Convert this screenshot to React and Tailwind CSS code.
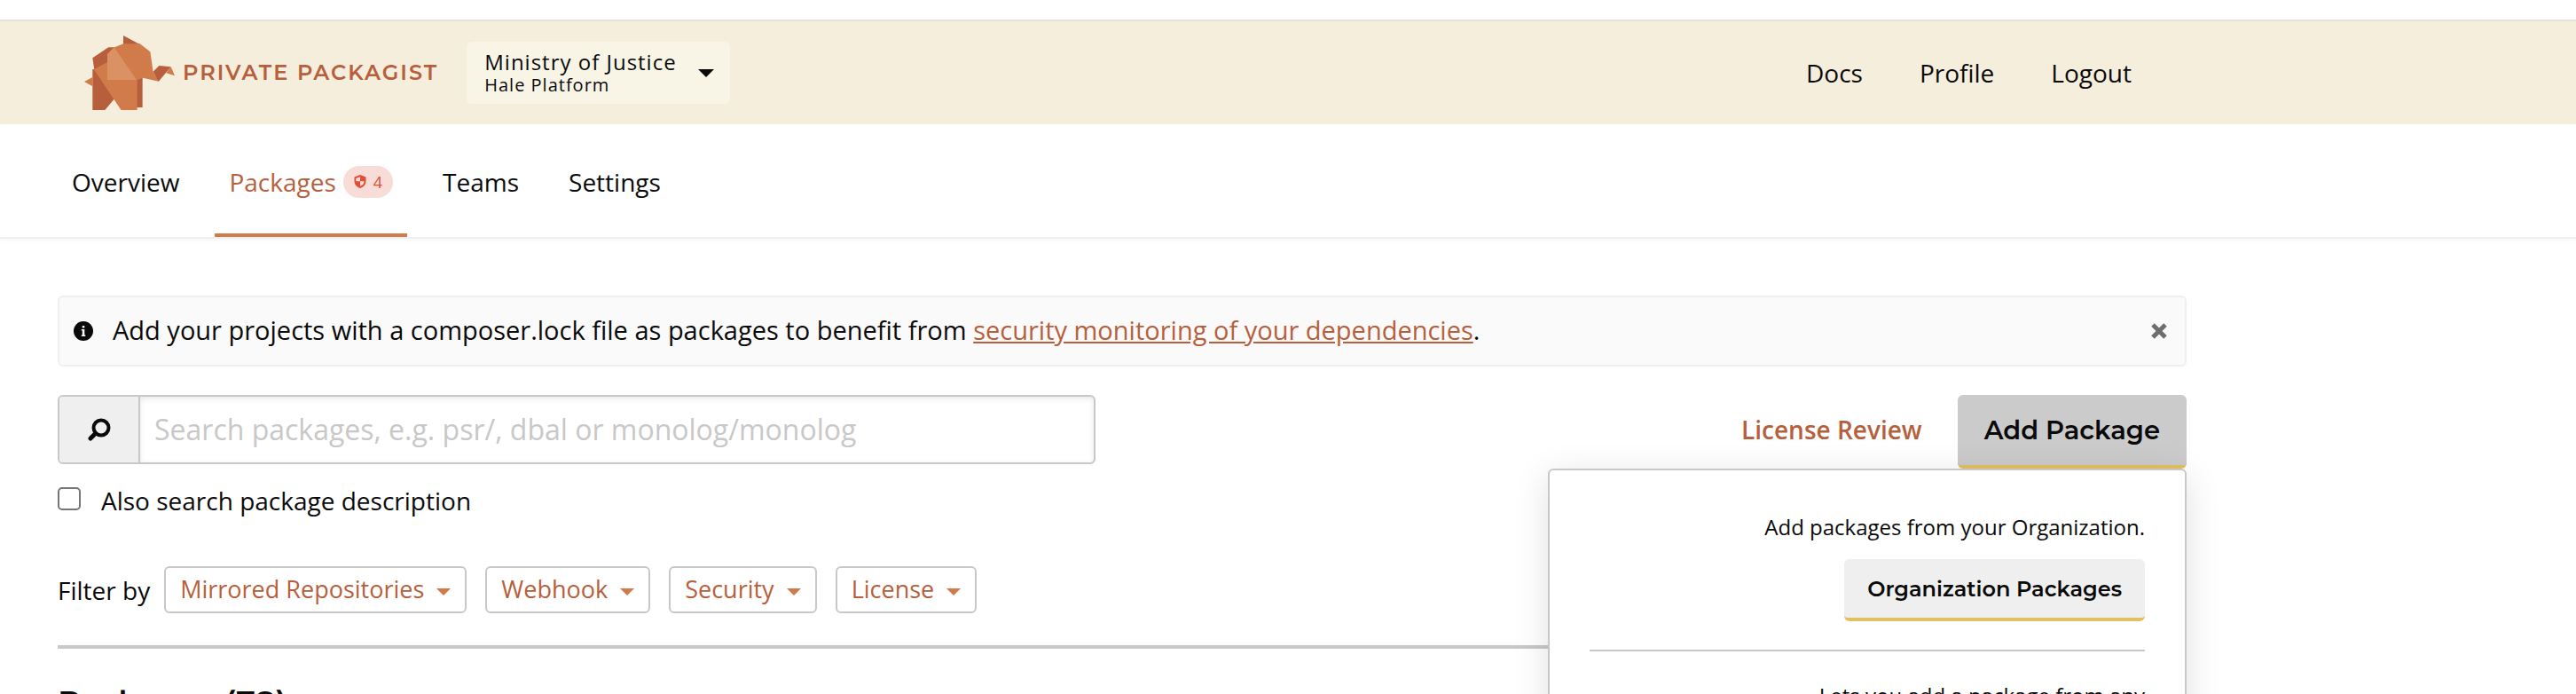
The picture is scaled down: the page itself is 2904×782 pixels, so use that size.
const heading = "font-[Montserrat,Inter,'Open_Sans',sans-serif]";

function Elephant() {
  return (
    <svg viewBox="0 0 306 252" className="h-[84px] w-[102px] shrink-0" aria-hidden="true">
      <path fill="#b75f3d" d="M132 0v30h56z" />
      <path fill="#b75f3d" d="M28 76 82 40h20l-2 60L34 116z" />
      <path fill="#b75f3d" d="M28 114l6 0 68 100-32 38H28z" />
      <path fill="#d27b4a" d="M0 156l28-15v31z" />
      <path fill="#b75f3d" d="M176 148l21-7v102h-21z" />
      <path fill="#d27b4a" d="M33 115 78 90V62l24-22 30-12h56l35 27 10 68 19 32-54-12-19 7v104h-53z" />
      <path fill="#da9164" d="M78 150V64l23-24 76 110z" />
      <path fill="#b75f3d" d="M233 122l20-20 40 4-42 50z" />
      <path fill="#d27b4a" d="M293 106l13 30-29-9z" />
    </svg>
  );
}

function Caret({ className }) {
  return (
    <svg viewBox="0 0 18 9" className={className} fill="currentColor" aria-hidden="true">
      <path d="M0 0h18l-9 9z" />
    </svg>
  );
}

function Header() {
  return (
    <header className="mt-[22px] border-t-2 border-[#e2e2e2] bg-[#f5eedc]">
      <div className="mx-[65px] flex h-[116px] max-w-[2400px] items-center pr-[62px] pl-[30px]">
        <a href="#home" className="flex items-center gap-[9px]">
          <Elephant />
          <span className={`${heading} text-2xl font-semibold tracking-[2px] whitespace-nowrap text-[#b75f3d]`}>
            PRIVATE PACKAGIST
          </span>
        </a>
        <button type="button" className="ml-8 flex h-[70px] items-center gap-6 rounded-md bg-[#f8f5e7] pr-[18px] pl-5 text-left whitespace-nowrap">
          <span className="flex flex-col tracking-[1px]">
            <span className="text-2xl leading-[28px]">Ministry of Justice</span>
            <span className="text-xl leading-[24px]">Hale Platform</span>
          </span>
          <Caret className="h-[9px] w-[18px]" />
        </button>
        <nav className="ml-auto flex gap-16 text-[28px] leading-[38px]">
          <a href="#docs">Docs</a>
          <a href="#profile">Profile</a>
          <a href="#logout">Logout</a>
        </nav>
      </div>
    </header>
  );
}

function ShieldBadge() {
  return (
    <span className="ml-2 flex h-9 items-center gap-2 rounded-full bg-[#f8dcd8] px-3 text-lg text-[#df4e35]">
      <svg viewBox="0 0 14 15" className="h-[15px] w-[14px]" aria-hidden="true">
        <path fill="currentColor" d="M7 0l6.500 2.500v4.500c0 4-2.500 6.800-6.500 8C3 13.800.5 11 .5 7V2.500z" />
        <path fill="#f8dcd8" d="M7 2.200V7.200H2.300V3.900zM7 7.200h4.600c-.2 2.600-1.800 4.600-4.600 5.600z" />
      </svg>
      4
    </span>
  );
}

function Tabs() {
  return (
    <nav className="border-b-2 border-[#efefef] shadow-[0_2px_6px_rgba(0,0,0,0.03)]">
      <div className="mx-[65px] flex h-[127px] max-w-[2400px] gap-6 text-[28px] leading-[38px]">
        <a href="#overview" className="flex items-center border-b-4 border-transparent px-4 pt-1.5">Overview</a>
        <a href="#packages" className="flex items-center border-b-4 border-[#d27b4a] px-4 pt-1.5 text-[#b75f3d]">
          Packages
          <ShieldBadge />
        </a>
        <a href="#teams" className="flex items-center border-b-4 border-transparent px-4 pt-1.5">Teams</a>
        <a href="#settings" className="flex items-center border-b-4 border-transparent px-4 pt-1.5">Settings</a>
      </div>
    </nav>
  );
}

function Notice() {
  return (
    <div className="flex h-20 items-center rounded-md border-2 border-[#efefef] bg-[#fafafa] pr-5 pl-4">
      <svg viewBox="0 0 22 22" className="size-[22px]" aria-hidden="true">
        <circle cx="11" cy="11" r="11" fill="#0a0a0a" />
        <path fill="#fafafa" d="M9.800 5h2.500v2.500H9.800zM8.800 9h3.500v6.500h1V17H8.800v-1.500h1v-5h-1z" />
      </svg>
      <p className="ml-[22px] pb-0.5 text-[29px] leading-[38px]">
        Add your projects with a composer.lock file as packages to benefit from{" "}
        <a href="#monitoring" className="text-[#b75f3d] underline">security monitoring of your dependencies</a>.
      </p>
      <button type="button" aria-label="Dismiss" className="ml-auto text-[#6e6e6e]">
        <svg viewBox="0 0 18 18" className="size-[18px]" stroke="currentColor" strokeWidth="5">
          <path d="M2 2l14 14M16 2L2 16" />
        </svg>
      </button>
    </div>
  );
}

function Search() {
  return (
    <form className="w-[1170px]">
      <div className="flex h-[78px] overflow-hidden rounded-md border-2 border-[#c8c8c8]">
        <label htmlFor="query" aria-label="Search packages" className="flex w-[91px] shrink-0 items-center justify-center border-r-2 border-[#c8c8c8] bg-[#efefef]">
          <svg viewBox="0 0 26 26" className="size-[26px]" fill="none" stroke="#0a0a0a" aria-hidden="true">
            <circle cx="15" cy="11" r="8.500" strokeWidth="4" />
            <path d="M8.500 17.500L3 23" strokeWidth="5" strokeLinecap="round" />
          </svg>
        </label>
        <input
          id="query"
          type="text"
          placeholder="Search packages, e.g. psr/, dbal or monolog/monolog"
          className="min-w-0 flex-1 px-4 text-[32px] shadow-[inset_0_2px_6px_rgba(0,0,0,0.1)] outline-none placeholder:text-[#c8c8c8]"
        />
      </div>
      <div className="mt-[22px] flex items-start gap-[23px]">
        <input id="descriptions" type="checkbox" className="mt-1 size-[26px] appearance-none rounded-[5px] border-2 border-[#767676] bg-white" />
        <label htmlFor="descriptions" className="text-[28px] leading-[38px]">Also search package description</label>
      </div>
    </form>
  );
}

function AddPackageMenu() {
  return (
    <div className="absolute top-full right-0 w-[720px] rounded-md border-2 border-[#c8c8c8] bg-white px-[45px] pt-[46px] pb-12 text-right text-2xl leading-9 shadow-[0_8px_40px_rgba(0,0,0,0.12)]">
      <p>Add packages from your Organization.</p>
      <button type="button" className={`${heading} mt-[18px] h-[70px] rounded-md border-b-4 border-[#e4c062] bg-[#efefef] px-[26px] pt-0.5 text-2xl font-semibold`}>
        Organization Packages
      </button>
      <hr className="my-8 border-t-2 border-[#c8c8c8]" />
      <p>Lets you add a package from any</p>
    </div>
  );
}

function Actions() {
  return (
    <div className="relative flex items-start gap-10">
      <a href="#license-review" className="flex h-[78px] items-center text-[28px] font-semibold text-[#b75f3d]">License Review</a>
      <button type="button" className={`${heading} h-[83px] rounded-md border-b-4 border-[#e4c062] bg-[#cbcbcb] px-[30px] text-[29px] font-semibold`}>
        Add Package
      </button>
      <AddPackageMenu />
    </div>
  );
}

function Filters() {
  return (
    <div className="mt-[55px] flex items-center">
      <span className="mr-4 text-[28px] leading-[38px]">Filter by</span>
      <div className="flex gap-[21px]">
        {["Mirrored Repositories", "Webhook", "Security", "License"].map((name) => (
          <button key={name} type="button" className="flex h-[53px] items-center gap-[14px] rounded-md border-2 border-[#c8c8c8] px-4 text-[27px] text-[#b75f3d]">
            {name}
            <Caret className="mt-1 h-2 w-4 text-[#d27b4a]" />
          </button>
        ))}
      </div>
    </div>
  );
}

export default function App() {
  return (
    <div className="h-screen overflow-hidden bg-white font-['Open_Sans',sans-serif] text-[#0a0a0a]">
      <Header />
      <Tabs />
      <main className="mx-[65px] max-w-[2400px] pt-16">
        <Notice />
        <div className="mt-8 flex items-start justify-between">
          <Search />
          <Actions />
        </div>
        <Filters />
        <hr className="mt-9 border-t-4 border-[#c8c8c8]" />
        <h1 className={`${heading} mt-[37px] text-[36px] leading-[48px] font-semibold`}>Packages (78)</h1>
      </main>
    </div>
  );
}
